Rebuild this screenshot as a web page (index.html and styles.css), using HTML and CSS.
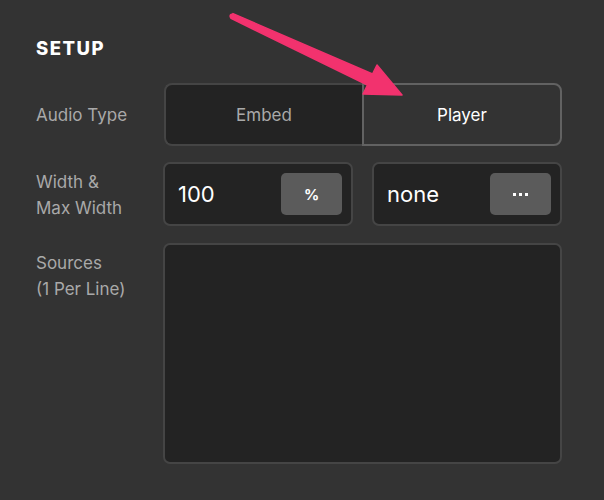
FILE: index.html
```html
<!DOCTYPE html>
<html lang="en">

<head>
    <meta charset="UTF-8">
    <meta name="viewport" content="width=device-width, initial-scale=1.0">
    <title>Audio Setup</title>
    <link rel="stylesheet" href="styles.css">
</head>

<body>
    <div class="setup">
        <div class="title">SETUP</div>

        <div class="form">
            <!-- audio type -->
            <div class="label center">Audio Type</div>
            <div class="segmented">
                <button class="seg embed">Embed</button>
                <button class="seg player active">Player</button>
            </div>

            <!-- width -->
            <div class="label">Width &amp;<br>Max Width</div>
            <div class="pair">
                <div class="field">
                    <span class="value">100</span>
                    <button class="unit">%</button>
                </div>
                <div class="field">
                    <span class="value">none</span>
                    <button class="unit dots"><i></i><i></i><i></i></button>
                </div>
            </div>

            <!-- sources -->
            <div class="label">Sources<br>(1 Per Line)</div>
            <div class="sources"></div>
        </div>
    </div>

    <svg class="arrow" width="604" height="500" viewBox="0 0 604 500">
        <polygon points="233,13.6 372.5,74 377,65 402,95 363,94 367.5,85 231,18.4"
            fill="#f2326e" stroke="#f2326e" stroke-width="1.5" stroke-linejoin="round" />
        <circle cx="232" cy="16" r="2.6" fill="#f2326e" />
    </svg>
</body>

</html>
```

FILE: styles.css
```css
body {
    background-color: #333333;
    margin: 0;
    font-family: Inter, "Liberation Sans", sans-serif;
    color: #a9a9a9;
}

.setup {
    padding: 36px 42px 0 36px;
}

.title {
    color: #ffffff;
    font-size: 18.5px;
    font-weight: 800;
    letter-spacing: 1.5px;
    line-height: 24px;
}

.form {
    display: grid;
    grid-template-columns: 127px 1fr;
    grid-template-rows: 63px 64px 220px;
    row-gap: 17px;
    margin-top: 23px;
}

.form .pair {
    margin-top: -1px;
}

.label {
    font-size: 17px;
    line-height: 26px;
    padding-top: 6px;
}

.label.center {
    padding-top: 0;
    align-self: center;
}

.segmented {
    display: flex;
    margin-left: 1px;
}

.seg {
    flex: 1;
    font-family: inherit;
    font-size: 17px;
    border: 2px solid #454545;
    background-color: #232323;
    color: #a9a9a9;
}

.embed {
    border-right: none;
    border-radius: 8px 0 0 8px;
}

.player.active {
    border-color: #626262;
    background-color: #333333;
    color: #ffffff;
    border-radius: 0 8px 8px 0;
}

.pair {
    display: flex;
    gap: 19px;
    height: 64px;
}

.field {
    flex: 1;
    display: flex;
    align-items: center;
    justify-content: space-between;
    box-sizing: border-box;
    padding: 0 9px 0 13px;
    background-color: #232323;
    border: 2px solid #454545;
    border-radius: 7px;
}

.value {
    color: #ffffff;
    font-size: 22px;
}

.unit {
    width: 61px;
    height: 42px;
    border: none;
    border-radius: 5px;
    background-color: #5b5b5b;
    color: #ffffff;
    font-family: inherit;
    font-size: 15px;
    font-weight: 700;
}

.dots {
    display: flex;
    align-items: center;
    justify-content: center;
    gap: 3px;
}

.dots i {
    width: 3px;
    height: 3px;
    background-color: #ffffff;
}

.sources {
    background-color: #232323;
    border: 2px solid #454545;
    border-radius: 7px;
    margin-top: -1px;
}

.arrow {
    position: absolute;
    left: 0;
    top: 0;
    pointer-events: none;
}
```
